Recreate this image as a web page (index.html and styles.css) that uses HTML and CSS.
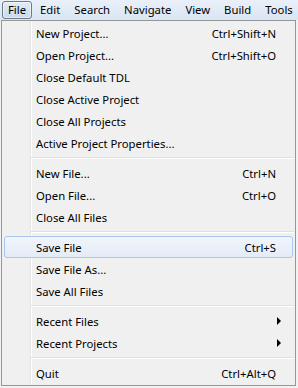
FILE: index.html
```html
<!DOCTYPE html>
<html>
<head>
<meta charset="utf-8">
<link rel="stylesheet" href="styles.css">
</head>
<body>
<div class="menubar">
  <span class="top-item active">File</span>
  <span class="top-item">Edit</span>
  <span class="top-item">Search</span>
  <span class="top-item">Navigate</span>
  <span class="top-item">View</span>
  <span class="top-item">Build</span>
  <span class="top-item">Tools</span>
</div>
<div class="dropdown">
  <div class="item"><span class="label">New Project...</span><span class="key">Ctrl+Shift+N</span></div>
  <div class="item"><span class="label">Open Project...</span><span class="key">Ctrl+Shift+O</span></div>
  <div class="item"><span class="label">Close Default TDL</span></div>
  <div class="item"><span class="label">Close Active Project</span></div>
  <div class="item"><span class="label">Close All Projects</span></div>
  <div class="item"><span class="label">Active Project Properties...</span></div>
  <div class="sep"></div>
  <div class="item"><span class="label">New File...</span><span class="key">Ctrl+N</span></div>
  <div class="item"><span class="label">Open File...</span><span class="key">Ctrl+O</span></div>
  <div class="item"><span class="label">Close All Files</span></div>
  <div class="sep"></div>
  <div class="item hover"><span class="label">Save File</span><span class="key">Ctrl+S</span></div>
  <div class="item"><span class="label">Save File As...</span></div>
  <div class="item"><span class="label">Save All Files</span></div>
  <div class="sep"></div>
  <div class="item"><span class="label">Recent Files</span><span class="arrow"></span></div>
  <div class="item"><span class="label">Recent Projects</span><span class="arrow"></span></div>
  <div class="sep"></div>
  <div class="item"><span class="label">Quit</span><span class="key">Ctrl+Alt+Q</span></div>
</div>
</body>
</html>
```
FILE: styles.css
```css
html, body {
  margin: 0;
  padding: 0;
}
body {
  width: 298px;
  height: 388px;
  background: #f2f2f2;
  font-family: "Noto Sans", "Open Sans", sans-serif;
  font-size: 11.3px;
  color: #000;
  overflow: hidden;
}
.menubar {
  height: 20px;
  display: flex;
  align-items: center;
  background: linear-gradient(to bottom, #e9f0f9 0%, #dae6f4 100%);
  padding-left: 2px;
}
.top-item {
  height: 18px;
  line-height: 16px;
  padding: 0 5px;
  box-sizing: border-box;
  border: 1px solid transparent;
  margin-right: 2px;
  white-space: nowrap;
}
.top-item.active {
  border-color: #6e7887;
  border-radius: 3px;
  background: linear-gradient(to bottom, #e3ecf7 0%, #c9d9ec 100%);
  box-shadow: inset 0 0 0 1px rgba(255,255,255,0.5);
}
.dropdown {
  margin-left: 1px;
  width: 295px;
  box-sizing: border-box;
  border: 1px solid #979797;
  padding: 1px 0 1px 0;
  background:
    linear-gradient(to right, transparent 28px, #e2e3e3 28px, #e2e3e3 29px, #ffffff 29px, #ffffff 30px, transparent 30px),
    #f0f0f0;
}
.item {
  height: 22px;
  margin: 0 2px;
  display: flex;
  align-items: center;
  box-sizing: border-box;
  border: 1px solid transparent;
  border-radius: 3px;
  padding: 0 16px 0 31px;
}
.item.hover {
  border-color: #a8c8ee;
  background: linear-gradient(to bottom, #f1f5fb 0%, #e3ebf6 100%);
}
.label {
  flex: 1;
  white-space: nowrap;
}
.key {
  white-space: nowrap;
}
.arrow {
  width: 0;
  height: 0;
  border-top: 4px solid transparent;
  border-bottom: 4px solid transparent;
  border-left: 4px solid #000;
  margin-right: -5px;
}
.sep {
  height: 8px;
  margin-left: 29px;
  margin-right: 1px;
  display: flex;
  flex-direction: column;
  justify-content: center;
}
.sep::before {
  content: "";
  display: block;
  height: 1px;
  background: #e0e0e0;
}
.sep::after {
  content: "";
  display: block;
  height: 1px;
  background: #ffffff;
}
```
